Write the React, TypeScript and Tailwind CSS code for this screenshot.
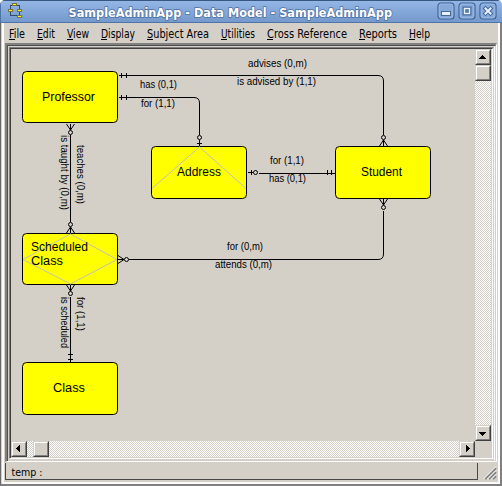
import type { CSSProperties } from 'react';

const menus: [string, string, number][] = [
  ['File', 'w-[28px]', 16], ['Edit', 'w-[30px]', 18], ['View', 'w-[34px]', 22], ['Display', 'w-[46px]', 34],
  ['Subject Area', 'w-[74px]', 62], ['Utilities', 'w-[46px]', 34], ['Cross Reference', 'w-[92px]', 80],
  ['Reports', 'w-[50px]', 38], ['Help', 'w-[30px]', 21],
];

const checker: CSSProperties = {
  backgroundImage: 'conic-gradient(#fff 25%, #d4d0c8 0 50%, #fff 0 75%, #d4d0c8 0)',
  backgroundSize: '2px 2px',
};

function Label({ x, y, w, size = 10, children }: { x: number; y: number; w: number; size?: number; children: string }) {
  return (
    <text x={x} y={y} textLength={w} fontSize={size} fill="#000" lengthAdjust="spacingAndGlyphs">{children}</text>
  );
}

function VLabel({ x, y, w, children }: { x: number; y: number; w: number; children: string }) {
  return (
    <text transform={`translate(${x} ${y}) rotate(90)`} textLength={w} fontSize={10} fill="#000" lengthAdjust="spacingAndGlyphs">{children}</text>
  );
}

function Entity({ x, y, h = 51 }: { x: number; y: number; h?: number }) {
  return <rect x={x + 0.5} y={y + 0.5} width={95} height={h} rx={4} fill="#ffff00" stroke="#000" />;
}

function Crow({ x, y, r }: { x: number; y: number; r: number }) {
  return (
    <g transform={`translate(${x} ${y}) rotate(${r})`} fill="none" stroke="#000">
      <path d="M-4 0L0 6L4 0M0 0V6" />
      <circle cx="0" cy="8.5" r="2" />
    </g>
  );
}

function Diagram() {
  return (
    <svg width="464" height="392" viewBox="11 49 464 392" className="block shrink-0" fontFamily="'Liberation Sans', Arial, sans-serif">
      <g fill="none" stroke="#000">
        <path d="M119 75.5H378Q383.5 75.5 383.5 81V135" />
        <path d="M119 97.5H194Q199.5 97.5 199.5 103V135M199.500 140V146" />
        <path d="M259 173.500H335" />
        <path d="M70.500 135V222M70.500 297V362" />
        <path d="M129 259.500H378Q383.500 259.500 383.500 254V211" />
        <path d="M121.500 73V78M126.500 73V78M121.500 95V100M126.500 95V100" />
        <path d="M197 143.500H202M248 172.500H253M251.500 170V175M327.500 170V175M331.500 170V175" />
        <path d="M68 354.500H73M68 359.500H73" />
        <circle cx="199.500" cy="137.500" r="2" />
        <circle cx="255.500" cy="172.500" r="2" />
      </g>
      <Entity x={22} y={71} />
      <Entity x={151} y={146} h={52} />
      <Entity x={335} y={146} h={52} />
      <Entity x={22} y={233} />
      <Entity x={22} y={362} h={52} />
      <g fill="none" stroke="#c0c0c0">
        <path d="M152 188.500L199.500 147L246 188.500" />
        <path d="M23 259.500L70.500 234L117 259.500L70.500 284Z" />
      </g>
      <Crow x={70.5} y={124} r={0} />
      <Crow x={70.5} y={233} r={180} />
      <Crow x={70.5} y={285} r={0} />
      <Crow x={118} y={259.5} r={-90} />
      <Crow x={383.5} y={146} r={180} />
      <Crow x={383.5} y={199} r={0} />
      <Label x={42} y={101} w={53} size={12.5}>Professor</Label>
      <Label x={177} y={176} w={44} size={12.5}>Address</Label>
      <Label x={361} y={176} w={41} size={12.5}>Student</Label>
      <Label x={31} y={251} w={57} size={12.5}>Scheduled</Label>
      <Label x={31} y={265} w={32} size={12.5}>Class</Label>
      <Label x={53} y={392} w={32} size={12.5}>Class</Label>
      <Label x={248} y={67} w={59}>advises (0,m)</Label>
      <Label x={237} y={85} w={79}>is advised by (1,1)</Label>
      <Label x={140} y={88} w={37}>has (0,1)</Label>
      <Label x={141} y={107} w={34}>for (1,1)</Label>
      <Label x={270} y={164} w={34}>for (1,1)</Label>
      <Label x={269} y={182} w={37}>has (0,1)</Label>
      <Label x={227} y={250} w={36}>for (0,m)</Label>
      <Label x={215} y={268} w={57}>attends (0,m)</Label>
      <VLabel x={77} y={145} w={59}>teaches (0,m)</VLabel>
      <VLabel x={61} y={135} w={75}>is taught by (0,m)</VLabel>
      <VLabel x={77} y={297} w={34}>for (1,1)</VLabel>
      <VLabel x={61} y={297} w={51}>is scheduled</VLabel>
    </svg>
  );
}

function Button3D({ d }: { d?: string }) {
  return (
    <div className="h-4 w-4 shrink-0 border-t border-r border-b border-l border-t-[#d4d0c8] border-r-[#404040] border-b-[#404040] border-l-[#d4d0c8]">
      <div className="h-full border-t border-r border-b border-l border-t-white border-r-[#808080] border-b-[#808080] border-l-white bg-[#d4d0c8]">
        {d && <svg width="12" height="12" viewBox="0 0 12 12" className="block" shapeRendering="crispEdges"><path d={d} /></svg>}
      </div>
    </div>
  );
}

function WinButton({ kind }: { kind: 'min' | 'max' | 'close' }) {
  return (
    <svg width="18" height="18" viewBox="0 0 18 18" className="block">
      <rect x="1" y="1" width="16" height="16" rx="3" fill="#86a9d9" stroke="#3c6398" strokeWidth="1.200" />
      <rect x="2.200" y="2.200" width="13.600" height="13.600" rx="2" fill="none" stroke="#a3c0e8" strokeWidth="0.700" />
      {kind === 'min' && <rect x="4.500" y="9.500" width="9" height="4" fill="#e8f0fb" stroke="#47699a" />}
      {kind === 'max' && <g fill="none"><rect x="6.500" y="6.500" width="5" height="5" stroke="#46699c" strokeWidth="4" /><rect x="6.500" y="6.500" width="5" height="5" stroke="#e8f0fb" strokeWidth="1.500" /></g>}
      {kind === 'close' && <g strokeLinecap="square"><path d="M6.500 6.500L11.500 11.500M11.500 6.500L6.500 11.500" stroke="#46699c" strokeWidth="4" /><path d="M6.500 6.500L11.500 11.500M11.500 6.500L6.500 11.500" stroke="#e8f0fb" strokeWidth="2" /></g>}
    </svg>
  );
}

export default function App() {
  return (
    <div className="flex h-[486px] w-[502px] flex-col overflow-hidden rounded-t-[5px] bg-[#d4d0c8] font-['DejaVu_Sans_Condensed','DejaVu_Sans',sans-serif] text-black">
      <header className="flex h-[23px] shrink-0 items-start border-t border-b border-l border-t-[#38587f] border-b-[#4e74a8] border-l-[#4e74a8] bg-linear-to-b from-[#93b6e6] to-[#7599cc] pl-[7px]">
        <svg width="15" height="17" viewBox="0 0 15 17" className="mt-[1px]" shapeRendering="crispEdges">
          <path d="M5 3.500H2.500V8M9 3.500H11.500V8M2.500 10V13.500H9M11.500 10V14" fill="none" stroke="#354a69" />
          <g fill="#ffff00" stroke="#77733b"><rect x="4.500" y="1.500" width="4" height="2" /><rect x="0.500" y="7.500" width="4" height="2" /><rect x="9.500" y="7.500" width="4" height="2" /><rect x="9.500" y="13.500" width="4" height="2" /></g>
        </svg>
        <svg width="414" height="21" className="block shrink-0" viewBox="23 1 414 21">
          <g fontFamily="'DejaVu Sans', sans-serif" fontSize="12" fontWeight="700" fill="#fff" stroke="#4d6f9f" strokeWidth="1.500" paintOrder="stroke">
            <text x="68.500" y="17" textLength="323.500" lengthAdjust="spacingAndGlyphs">SampleAdminApp - Data Model - SampleAdminApp</text>
          </g>
        </svg>
        <div className="mt-[1px] flex w-[62px] shrink-0 gap-[3px]">
          <WinButton kind="min" /><WinButton kind="max" /><WinButton kind="close" />
        </div>
      </header>
      <div className="flex min-h-0 flex-1 border-r-2 border-b-2 border-l border-r-[#808080] border-b-[#808080] border-l-[#686868]">
        <div className="flex w-full border-l border-[#d4d0c8]">
          <div className="flex w-full flex-col border-r-2 border-b-2 border-l-2 border-[#fcfbf9]">
            <nav className="flex h-5 shrink-0 pl-[5px]">
              {menus.map(([name, width, textWidth]) => (
                <div key={name} className={`${width} shrink-0`}>
                  <svg width={textWidth + 2} height="20" className="block overflow-visible">
                    <text x="0" y="15" fontSize="11.500" textLength={textWidth} lengthAdjust="spacingAndGlyphs">{name}</text>
                    <path d="M0 16.500H6" stroke="#000" />
                  </svg>
                </div>
              ))}
            </nav>
            <div className="ml-px h-[419px] w-[492px] shrink-0 border-t-2 border-r border-b border-l-2 border-t-[#808080] border-r-white border-b-white border-l-[#808080]">
              <div className="h-full border-t border-r border-l border-t-[#505050] border-r-[#d4d0c8] border-l-[#505050]">
                <div className="h-full border-t border-r border-b-2 border-l border-t-[#d4d0c8] border-r-white border-b-[#d4d0c8] border-l-[#d4d0c8]">
                  <div className="h-full border-t border-r border-b border-l border-t-[#808080] border-r-[#d4d0c8] border-b-white border-l-[#808080]">
                    <div className="h-full border-t border-r border-l border-t-[#404040] border-r-white border-l-[#404040]">
                      <div className="flex h-[392px] overflow-hidden">
                        <Diagram />
                        <div className="flex w-4 shrink-0 flex-col" style={checker}>
                          <Button3D d="M5 4h1v1h1v1h1v1h1v1H2V7h1V6h1V5h1z" />
                          <Button3D />
                          <div className="flex-1" />
                          <Button3D d="M2 5h7v1H8v1H7v1H6v1H5V8H4V7H3V6H2z" />
                        </div>
                      </div>
                      <div className="flex h-4 w-[464px]" style={checker}>
                        <Button3D d="M7 2v7H6V8H5V7H4V6H3V5h1V4h1V3h1V2z" />
                        <div className="w-[6px]" />
                        <Button3D />
                        <div className="flex-1" />
                        <Button3D d="M5 2v7h1V8h1V7h1V6h1V5H8V4H7V3H6V2z" />
                      </div>
                    </div>
                  </div>
                </div>
              </div>
            </div>
            <footer className="flex min-h-0 flex-1 pt-px pl-px">
              <div className="h-[17px] w-[473px] shrink-0 border-r border-b border-l border-[#484848] pl-[5px]">
                <svg width="60" height="16" className="block"><text x="0.500" y="13" textLength="31" lengthAdjust="spacingAndGlyphs" fontSize="11">temp :</text></svg>
              </div>
              <svg width="17" height="17" className="ml-[2px] block shrink-0"><path d="M5 16L16 5M9 16L16 9M13 16L16 13" stroke="#808080" strokeWidth="1.800" /><path d="M3.500 16L16 3.500M7.500 16L16 7.500M11.500 16L16 11.500" stroke="#fff" /></svg>
            </footer>
          </div>
        </div>
      </div>
    </div>
  );
}
